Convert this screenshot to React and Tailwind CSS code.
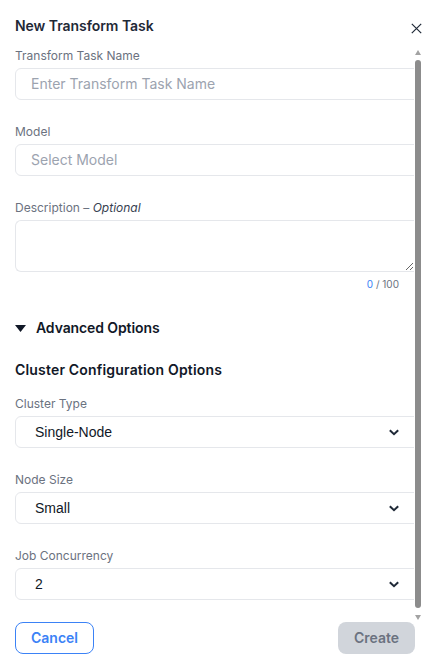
import React from "react";

function Label({ children, className = "" }) {
  return <label className={`block text-xs leading-4 text-[#6b7280] ${className}`}>{children}</label>;
}

function Select({ label, value, className = "" }) {
  return (
    <div className={className}>
      <Label>{label}</Label>
      <div className="relative mt-[4px] h-8 w-[412px]">
        <select
          defaultValue={value}
          className="h-8 w-full appearance-none rounded-md border border-[#e5e7eb] bg-white pl-[19px] text-sm text-[#111827] outline-none [font-family:'Liberation_Sans',Arial,sans-serif]"
        >
          <option>{value}</option>
        </select>
        <svg className="absolute left-[374px] top-[13px]" width="10" height="7" viewBox="0 0 10 7" fill="none">
          <path d="M.8 1.2 5 5.2l4.2-4" stroke="#1f2937" strokeWidth="2" />
        </svg>
      </div>
    </div>
  );
}

export default function App() {
  return (
    <div className="flex h-[665px] w-[432px] flex-col overflow-hidden bg-white pl-[15px] [font-family:Inter,sans-serif]">
      <div className="flex h-[48px] items-start justify-between pr-[10px] pt-[16px]">
        <h2 className="text-sm leading-5 font-semibold tracking-[-0.05px] text-[#1f2937]">New Transform Task</h2>
        <svg className="mt-[7px]" width="11" height="11" viewBox="0 0 11 11" fill="none">
          <path d="M.8.8l9.4 9.4M10.2.8.8 10.2" stroke="#1f2937" strokeWidth="1.2" />
        </svg>
      </div>
      <div className="flex h-[574px] items-stretch">
        <div className="w-[399px] overflow-hidden">
          <Label>Transform Task Name</Label>
          <input
            placeholder="Enter Transform Task Name"
            className="mt-[4px] block h-8 w-[412px] rounded-md border border-[#e5e7eb] bg-white pb-[2px] pl-[15px] text-sm outline-none placeholder:text-[#9ca3af]"
          />
          <Label className="mt-6">Model</Label>
          <input
            placeholder="Select Model"
            className="mt-[4px] block h-8 w-[412px] rounded-md border border-[#e5e7eb] bg-white pb-[2px] pl-[15px] text-sm outline-none placeholder:text-[#9ca3af]"
          />
          <Label className="mt-6">
            Description – <em className="text-[#374151]">Optional</em>
          </Label>
          <textarea className="mt-[4px] block h-[52px] w-full resize rounded-l-md border border-r-0 border-[#e5e7eb] bg-white outline-none" />
          <p className="mt-1 h-4 pr-[15px] text-right text-[10px] leading-4 text-[#6b7280]">
            <span className="text-[#3b82f6]">0</span> / 100
          </p>
          <div className="mt-[26px] flex h-5 items-center gap-[10px]">
            <svg width="11" height="7" viewBox="0 0 11 7">
              <path d="M0 0h11L5.5 7z" fill="#111827" />
            </svg>
            <span className="text-sm font-semibold tracking-[-0.1px] text-[#111827]">Advanced Options</span>
          </div>
          <h3 className="mt-[22px] text-sm leading-5 font-semibold tracking-[0.18px] text-[#111827]">
            Cluster Configuration Options
          </h3>
          <Select className="mt-[16px]" label="Cluster Type" value="Single-Node" />
          <Select className="mt-6" label="Node Size" value="Small" />
          <Select className="mt-6" label="Job Concurrency" value="2" />
        </div>
        <div className="ml-[1px] flex w-[6px] flex-col items-center">
          <svg className="mt-[2px]" width="6" height="5" viewBox="0 0 6 5">
            <path d="M3 0 6 5H0z" fill="#a3a3a3" />
          </svg>
          <div className="mt-[5px] h-[548px] w-[6px] rounded-full bg-[#8c8c8c]" />
          <svg className="mt-[7px]" width="6" height="5" viewBox="0 0 6 5">
            <path d="M0 0h6L3 5z" fill="#a3a3a3" />
          </svg>
        </div>
      </div>
      <div className="flex items-center justify-between pr-[17px]">
        <button className="h-8 w-[79px] rounded-lg border border-[#3b82f6] text-sm font-semibold text-[#3b82f6]">Cancel</button>
        <button className="h-8 w-[77px] rounded-lg bg-[#d1d5db] text-sm font-semibold text-[#6b7280]">Create</button>
      </div>
    </div>
  );
}
